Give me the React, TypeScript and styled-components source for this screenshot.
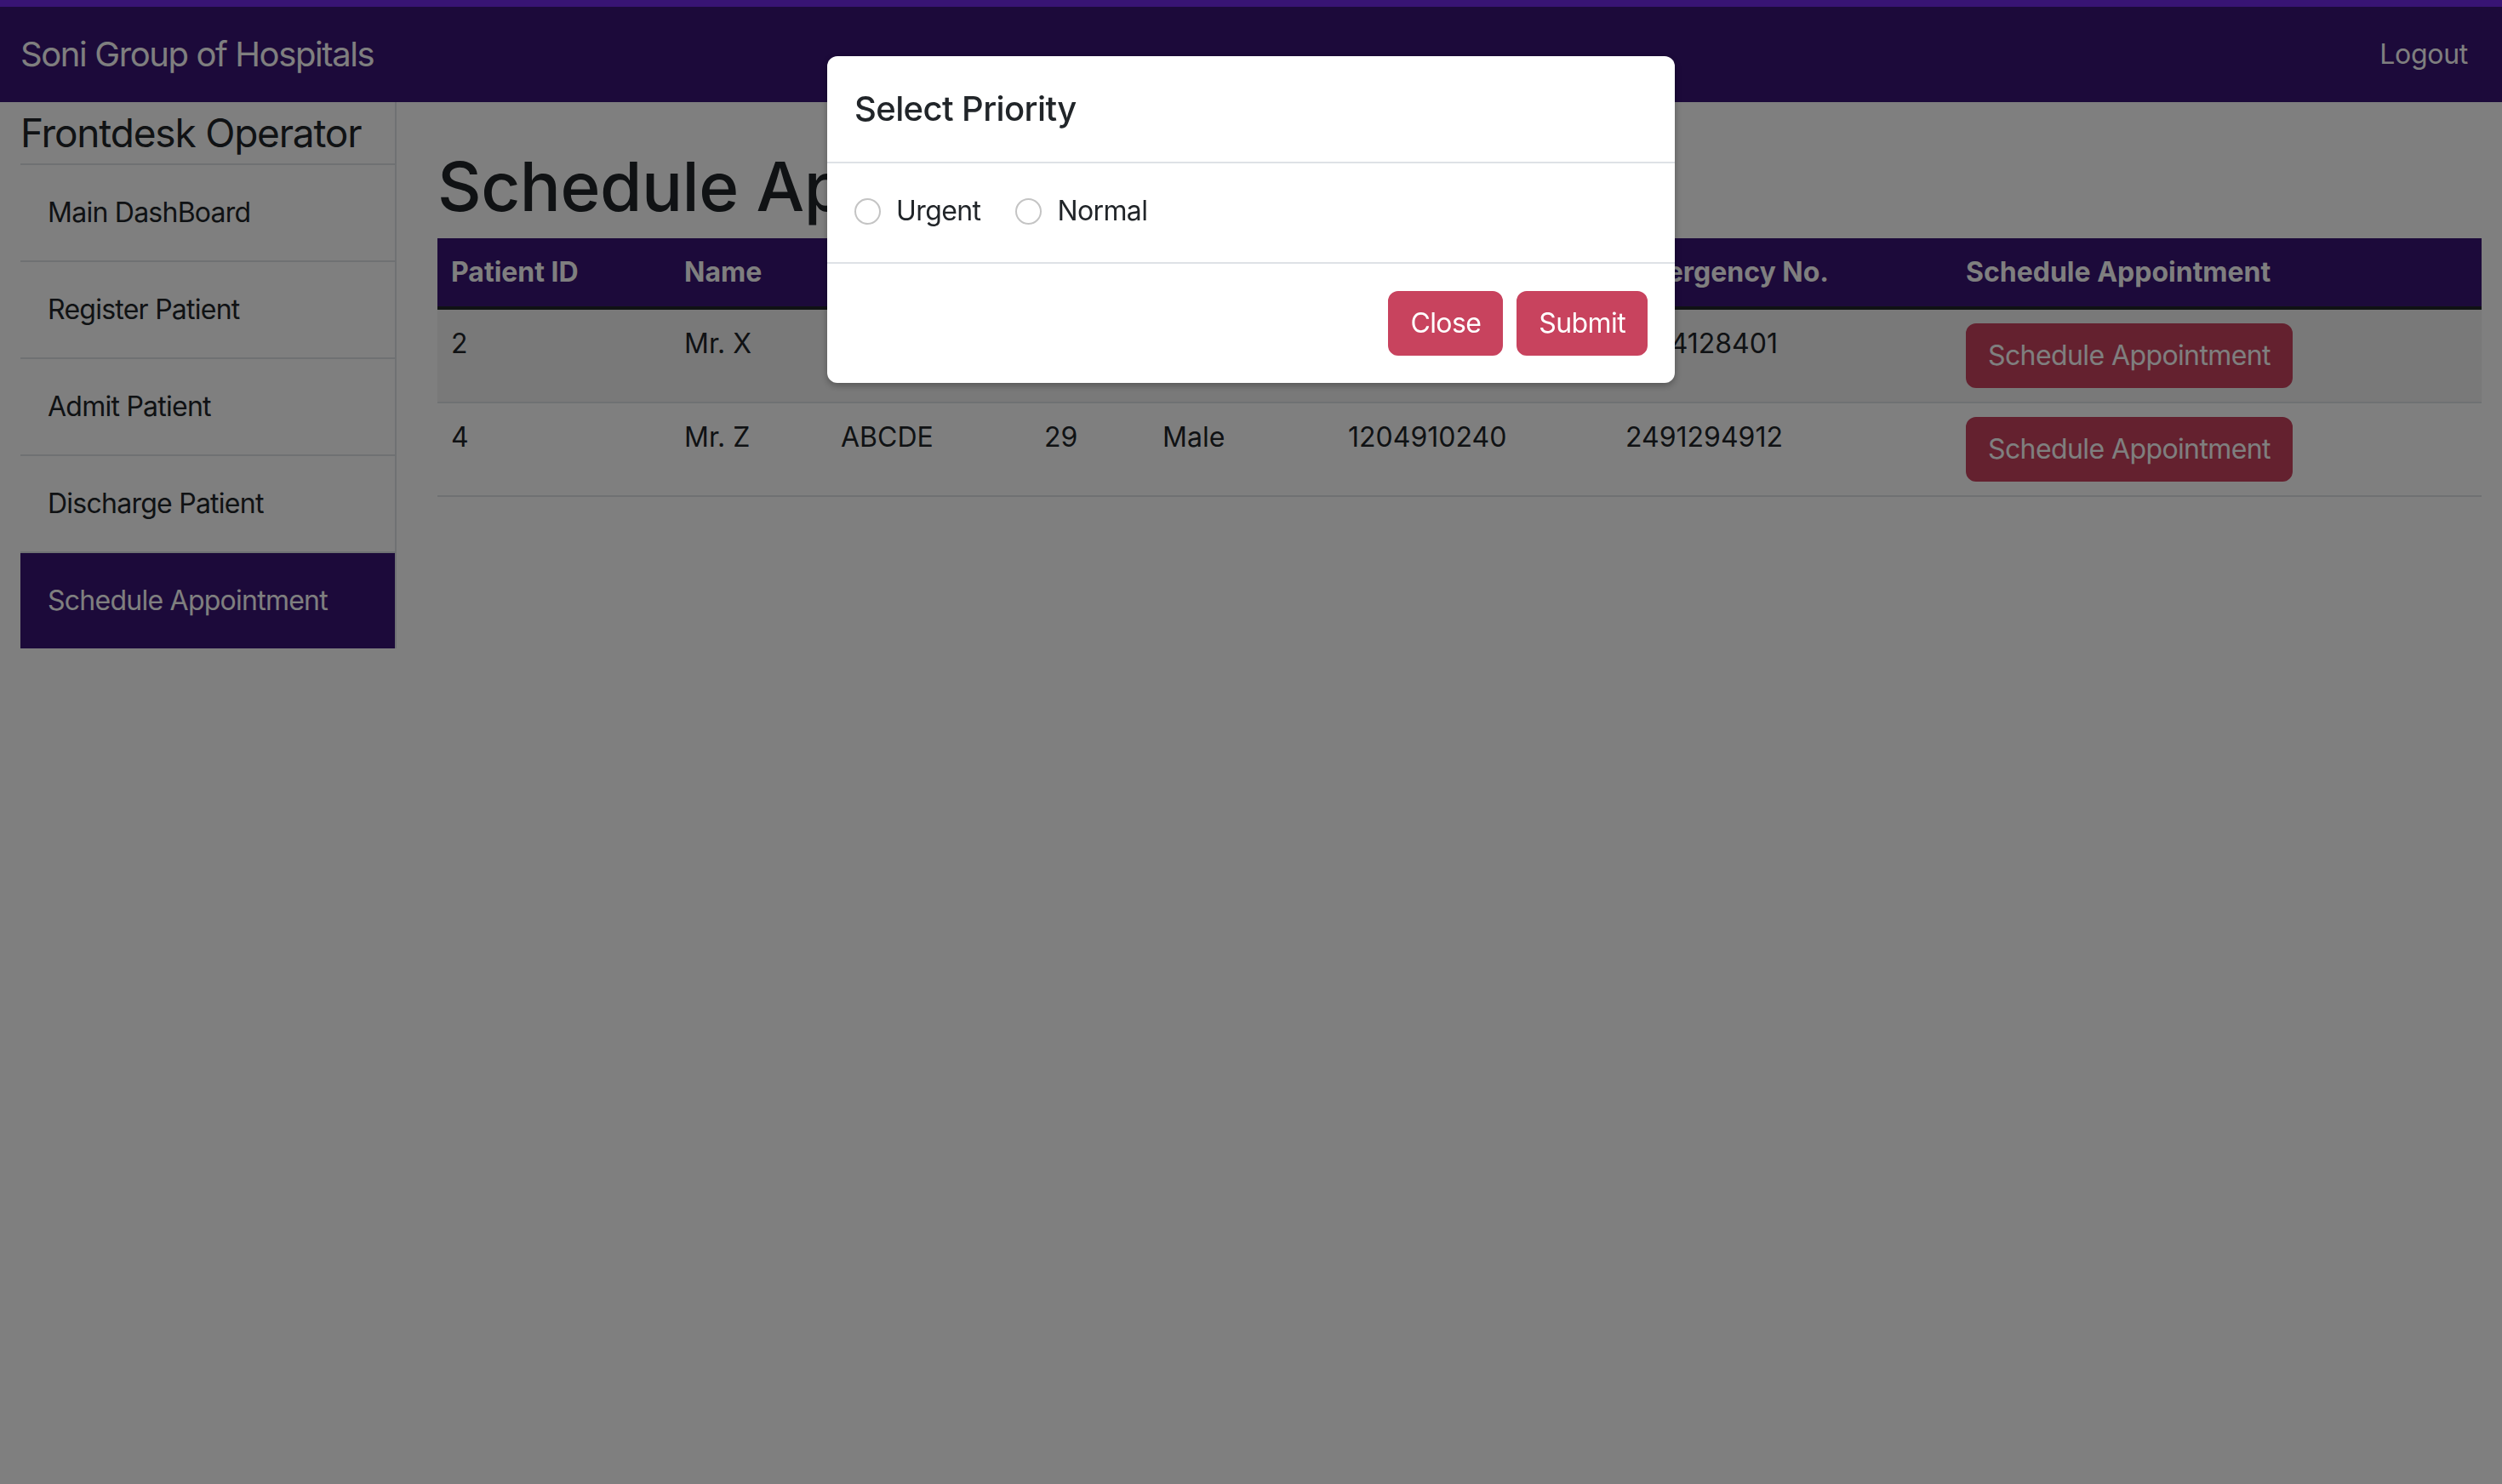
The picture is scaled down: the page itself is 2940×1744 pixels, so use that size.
import React from 'react';
import styled, { createGlobalStyle } from 'styled-components';

const GlobalStyle = createGlobalStyle`
  *, *::before, *::after { box-sizing: border-box; }
  html, body { margin: 0; padding: 0; }
  body {
    font-family: Inter, "Noto Sans", "Liberation Sans", sans-serif;
    color: #212529;
    background: #fff;
    font-size: 32px;
    line-height: 1.5;
  }
`;

const Navbar = styled.nav`
  height: 120px;
  padding: 8px 24px 0 24px;
  background: #381474;
  display: flex;
  align-items: center;
  justify-content: space-between;
`;

const Brand = styled.a`
  font-size: 40px;
  line-height: 60px;
  letter-spacing: -1.4px;
  color: #fff;
  text-decoration: none;
`;

const NavLink = styled.a`
  font-size: 32px;
  line-height: 48px;
  letter-spacing: -0.3px;
  color: #fff;
  padding: 0 16px;
  text-decoration: none;
`;

const Page = styled.div`
  display: flex;
  align-items: flex-start;
  padding: 0 24px;
`;

const Sidebar = styled.aside`
  width: 442px;
  flex: none;
  border-right: 2px solid #dee2e6;
`;

const SideTitle = styled.h4`
  margin: 0;
  padding: 9px 0 8px;
  font-size: 46px;
  font-weight: 400;
  line-height: 1.2;
  letter-spacing: -1.2px;
  border-bottom: 2px solid #dee2e6;
`;

const SideItem = styled.a<{ $active?: boolean }>`
  display: flex;
  align-items: center;
  height: ${(p) => (p.$active ? '112px' : '114px')};
  padding-left: 32px;
  font-size: 32px;
  letter-spacing: -0.75px;
  color: ${(p) => (p.$active ? '#fff' : '#212529')};
  background: ${(p) => (p.$active ? '#381474' : 'transparent')};
  border-bottom: ${(p) => (p.$active ? 'none' : '2px solid #dee2e6')};
  text-decoration: none;
`;

const Main = styled.main`
  flex: 1;
  padding-left: 48px;
`;

const Title = styled.h1`
  margin: 51px 0 13px;
  font-size: 80px;
  font-weight: 500;
  line-height: 1.2;
  letter-spacing: -0.5px;
`;

const Table = styled.table`
  width: 100%;
  table-layout: fixed;
  border-collapse: separate;
  border-spacing: 0;
`;

const Th = styled.th`
  padding: 16px;
  text-align: left;
  font-weight: 700;
  line-height: 48px;
  color: #fff;
  background: #381474;
  border-bottom: 4px solid #212529;
  white-space: nowrap;
`;

const Td = styled.td<{ $striped?: boolean }>`
  padding: 16px;
  vertical-align: top;
  line-height: 48px;
  background: ${(p) => (p.$striped ? '#f2f2f2' : 'transparent')};
  border-bottom: 2px solid #dee2e6;
  white-space: nowrap;
`;

const DangerButton = styled.button`
  font-family: inherit;
  font-size: 32px;
  line-height: 48px;
  letter-spacing: -0.6px;
  padding: 12px 24px;
  color: #fff;
  background: #c8435e;
  border: 2px solid #c8435e;
  border-radius: 12px;
  cursor: pointer;
`;

const Backdrop = styled.div`
  position: fixed;
  top: 8px;
  left: 0;
  right: 0;
  bottom: 0;
  background: rgba(0, 0, 0, 0.5);
  display: flex;
  justify-content: center;
  align-items: flex-start;
  padding-top: 58px;
`;

const Modal = styled.div`
  width: 996px;
  background: #fff;
  border-radius: 12px;
  box-shadow: 0 3px 8px rgba(0, 0, 0, 0.3);
  overflow: hidden;
`;

const ModalHeader = styled.div`
  padding: 32px;
  border-bottom: 2px solid #dee2e6;
`;

const ModalTitle = styled.h5`
  margin: 0;
  font-size: 40px;
  font-weight: 500;
  line-height: 60px;
  letter-spacing: -0.6px;
`;

const ModalBody = styled.div`
  padding: 32px;
`;

const RadioGroup = styled.div`
  display: flex;
  align-items: center;
  gap: 41px;
  margin-bottom: 4px;
`;

const RadioOption = styled.div`
  display: flex;
  align-items: center;
  gap: 18px;
`;

const RadioLabel = styled.label`
  font-size: 32px;
  line-height: 48px;
  letter-spacing: -0.6px;
`;

const Radio = styled.input`
  appearance: none;
  flex: none;
  margin: 0;
  width: 31px;
  height: 31px;
  border-radius: 50%;
  border: 2px solid #c4c4c4;
  background: #fff;
`;

const ModalFooter = styled.div`
  display: flex;
  justify-content: flex-end;
  gap: 16px;
  padding: 32px;
  border-top: 2px solid #dee2e6;
`;

const menu = ['Main DashBoard', 'Register Patient', 'Admit Patient', 'Discharge Patient'];

const headers = [
  'Patient ID',
  'Name',
  'Address',
  'Age',
  'Gender',
  'Contact No.',
  'Emergency No.',
  'Schedule Appointment',
];
const widths = [274, 184, 239, 139, 218, 326, 400, 622];

const rows = [
  ['2', 'Mr. X', 'XYZ', '25', 'Male', '1234567890', '1244128401'],
  ['4', 'Mr. Z', 'ABCDE', '29', 'Male', '1204910240', '2491294912'],
];

export default function App() {
  return (
    <>
      <GlobalStyle />
      <Navbar>
        <Brand>Soni Group of Hospitals</Brand>
        <NavLink>Logout</NavLink>
      </Navbar>
      <Page>
        <Sidebar>
          <SideTitle>Frontdesk Operator</SideTitle>
          {menu.map((m) => (
            <SideItem key={m}>{m}</SideItem>
          ))}
          <SideItem $active>Schedule Appointment</SideItem>
        </Sidebar>
        <Main>
          <Title>Schedule Appointment</Title>
          <Table>
            <colgroup>
              {widths.map((w, i) => (
                <col key={i} style={{ width: w }} />
              ))}
            </colgroup>
            <thead>
              <tr>
                {headers.map((h) => (
                  <Th key={h}>{h}</Th>
                ))}
              </tr>
            </thead>
            <tbody>
              {rows.map((r, i) => (
                <tr key={i}>
                  {r.map((c, j) => (
                    <Td key={j} $striped={i % 2 === 0}>
                      {c}
                    </Td>
                  ))}
                  <Td $striped={i % 2 === 0}>
                    <DangerButton>Schedule Appointment</DangerButton>
                  </Td>
                </tr>
              ))}
            </tbody>
          </Table>
        </Main>
      </Page>
      <Backdrop>
        <Modal>
          <ModalHeader>
            <ModalTitle>Select Priority</ModalTitle>
          </ModalHeader>
          <ModalBody>
            <RadioGroup>
              <RadioOption>
                <Radio type="radio" id="p-urgent" name="priority" value="urgent" />
                <RadioLabel htmlFor="p-urgent">Urgent</RadioLabel>
              </RadioOption>
              <RadioOption>
                <Radio type="radio" id="p-normal" name="priority" value="normal" />
                <RadioLabel htmlFor="p-normal">Normal</RadioLabel>
              </RadioOption>
            </RadioGroup>
          </ModalBody>
          <ModalFooter>
            <DangerButton>Close</DangerButton>
            <DangerButton>Submit</DangerButton>
          </ModalFooter>
        </Modal>
      </Backdrop>
    </>
  );
}
